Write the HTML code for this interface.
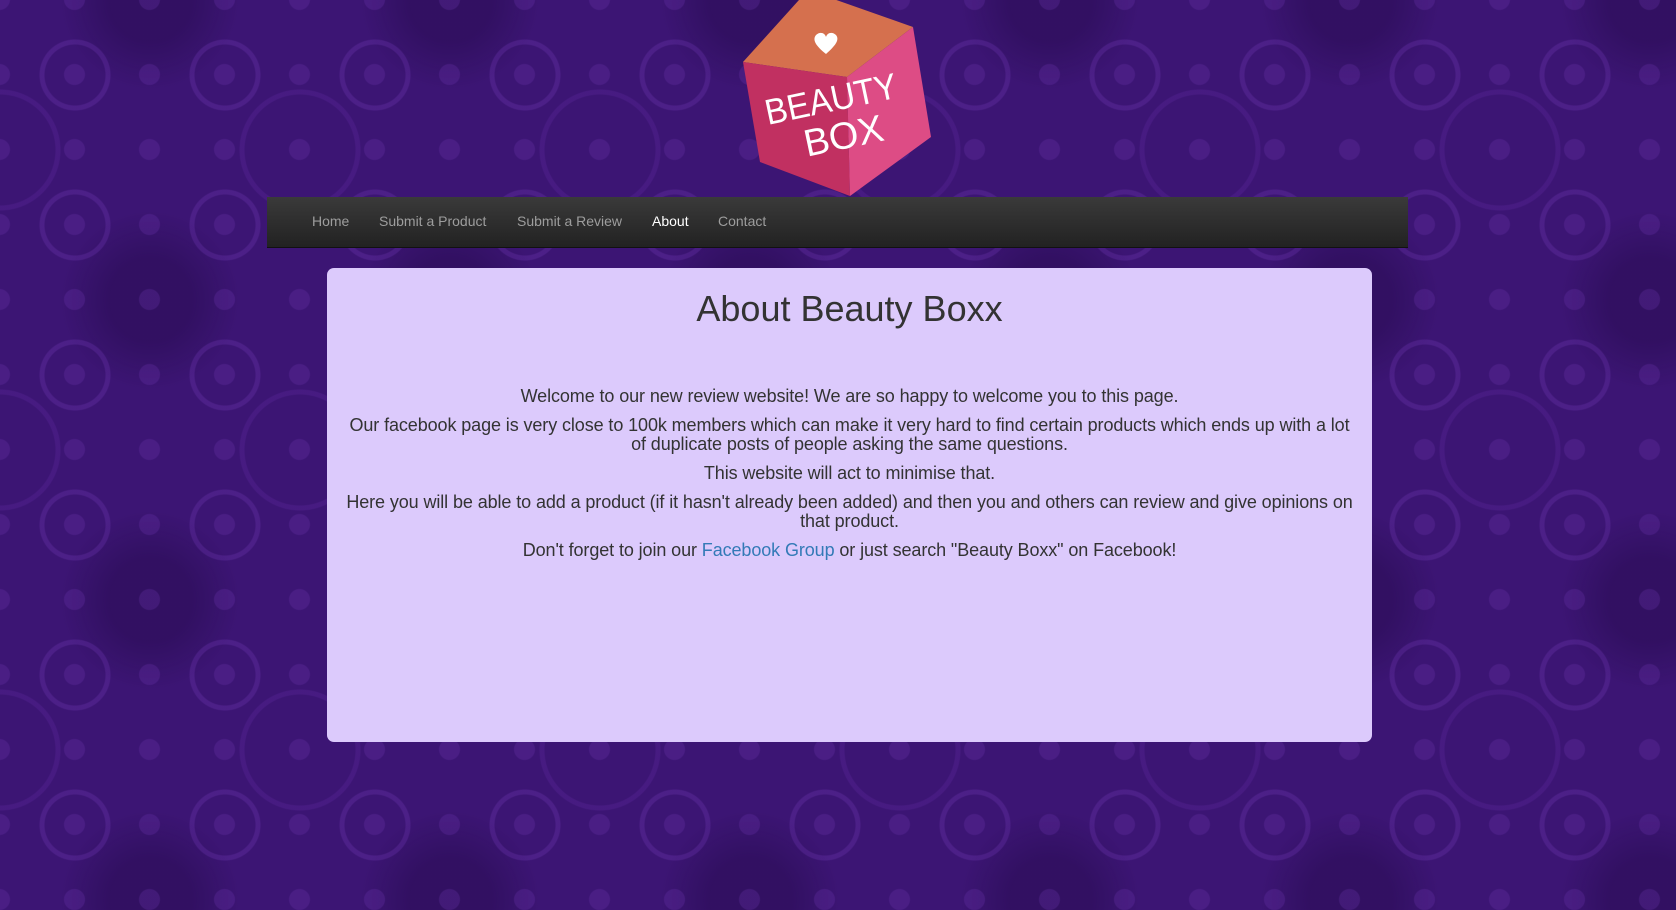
<!DOCTYPE html>
<html><head><meta charset="utf-8"><style>
html,body{margin:0;padding:0;width:1676px;height:910px;overflow:hidden}
body{background-color:#3c1574;
background-image:
radial-gradient(circle at 50% 50%, transparent 0 30px, rgba(105,50,170,.35) 31px 35px, transparent 36px),
radial-gradient(circle at 50% 50%, rgba(105,50,170,.3) 0 10px, transparent 11px),
radial-gradient(circle at 50% 50%, transparent 0 55px, rgba(95,40,160,.3) 56px 60px, transparent 61px),
radial-gradient(circle at 50% 50%, rgba(25,5,55,.3) 0 40px, transparent 90px);
background-size:150px 150px,75px 75px,300px 300px,300px 300px;
background-position:0 0,37px 37px,150px 0,0 150px;
font-family:"Liberation Sans",Arial,sans-serif;position:relative}
.nav{position:absolute;left:267px;top:197px;width:1141px;height:50px;background:linear-gradient(#3a3a3a,#222);border-bottom:1px solid #111}
.nav a{position:absolute;top:16px;font-size:14px;color:#9d9d9d;text-decoration:none}
.panel{position:absolute;left:327px;top:268px;width:1045px;height:474px;background:#dccafc;border-radius:7px;text-align:center;color:#333}
h1{margin:0;position:absolute;top:20px;width:100%;font-size:36px;font-weight:normal}
.p{position:absolute;left:17px;right:17px;font-size:18px;line-height:19px;letter-spacing:-0.1px}
.p a{color:#337ab7;text-decoration:none}
</style></head><body>
<svg style="position:absolute;left:738px;top:0" width="200" height="200" viewBox="0 0 200 200">
<polygon points="5,62 70,-10 175,27 109,77" fill="#d5704e"/>
<polygon points="5,62 109,77 112,196 22,162" fill="#c13061"/>
<polygon points="109,77 175,27 193,137 112,196" fill="#dd4c85"/>
<path d="M88,54 C78,46 74,40 78,35 C82,31 87,33 88,37 C89,33 94,31 98,35 C102,40 97,46 88,54Z" fill="#fff"/>
<text x="26" y="112" font-family="Liberation Sans Narrow,Liberation Sans,sans-serif" font-size="36" fill="#fff" transform="rotate(-12 90 100)" textLength="134" lengthAdjust="spacingAndGlyphs">BEAUTY</text>
<text x="66" y="152" font-family="Liberation Sans Narrow,Liberation Sans,sans-serif" font-size="38" fill="#fff" transform="rotate(-12 90 140)">BOX</text>
</svg>
<div class="nav">
<a style="left:45px">Home</a><a style="left:112px">Submit a Product</a><a style="left:250px">Submit a Review</a><a style="left:385px;color:#fff">About</a><a style="left:451px">Contact</a>
</div>
<div class="panel">
<h1>About Beauty Boxx</h1>
<div class="p" style="top:119px">Welcome to our new review website! We are so happy to welcome you to this page.</div>
<div class="p" style="top:148px">Our facebook page is very close to 100k members which can make it very hard to find certain products which ends up with a lot of duplicate posts of people asking the same questions.</div>
<div class="p" style="top:196px">This website will act to minimise that.</div>
<div class="p" style="top:225px">Here you will be able to add a product (if it hasn't already been added) and then you and others can review and give opinions on that product.</div>
<div class="p" style="top:273px">Don't forget to join our <a>Facebook Group</a> or just search "Beauty Boxx" on Facebook!</div>
</div>
</body></html>
